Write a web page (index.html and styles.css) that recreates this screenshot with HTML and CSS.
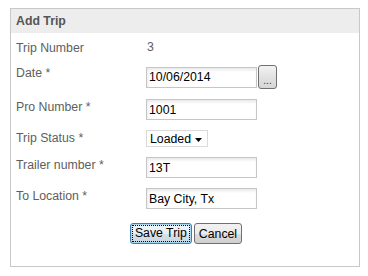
FILE: index.html
```html
<!DOCTYPE html>
<html lang="en">
<head>
    <meta charset="UTF-8">
    <title>Add Trip</title>
    <link rel="stylesheet" href="styles.css">
</head>
<body>
<div class="panel">
    <div class="panel-title">Add Trip</div>
    <form class="trip-form">
        <div class="row">
            <label>Trip Number</label>
            <span class="value">3</span>
        </div>
        <div class="row row-date">
            <label>Date *</label>
            <div class="field">
                <input type="text" class="text-box" value="10/06/2014">
                <button type="button" class="pick">...</button>
            </div>
        </div>
        <div class="row">
            <label>Pro Number *</label>
            <input type="text" class="text-box" value="1001">
        </div>
        <div class="row">
            <label>Trip Status *</label>
            <div class="select-box">
                <span>Loaded</span>
                <svg width="7" height="4" viewBox="0 0 7 4"><path d="M0 0h7L3.5 4z" fill="#000"/></svg>
            </div>
        </div>
        <div class="row">
            <label>Trailer number *</label>
            <input type="text" class="text-box" value="13T">
        </div>
        <div class="row">
            <label>To Location *</label>
            <input type="text" class="text-box" value="Bay City, Tx">
        </div>
        <div class="actions">
            <button type="submit" class="btn btn-focus"><span>Save Trip</span></button>
            <button type="button" class="btn">Cancel</button>
        </div>
    </form>
</div>
</body>
</html>
```

FILE: styles.css
```css
body {
    margin: 0;
    font-family: "Liberation Sans", Arial, sans-serif;
    font-size: 12.3px;
    background: #fff;
}
.panel {
    width: 348px;
    height: 257px;
    margin: 8px 0 0 10px;
    border: 1px solid #c8c8c8;
}
.panel-title {
    height: 24px;
    line-height: 24px;
    padding-left: 5px;
    background: #ededed;
    color: #555;
    font-weight: bold;
}
.trip-form {
    display: flex;
    flex-direction: column;
    gap: 10px;
    padding: 7px 0 0 5px;
}
.row {
    display: flex;
    align-items: flex-start;
}
.row label {
    width: 130px;
    padding-top: 1px;
    line-height: 14px;
    color: #5e5e5e;
}
.value {
    line-height: 14px;
    color: #5e5e5e;
    padding-left: 1px;
}
.field {
    display: flex;
    align-items: center;
    gap: 1px;
}
.row-date label {
    padding-top: 1px;
}
.text-box {
    box-sizing: border-box;
    width: 111px;
    height: 21px;
    margin: 0;
    padding: 0 2px;
    border: 1px solid #c6c6c6;
    font-family: inherit;
    font-size: 12.3px;
    color: #000;
    background: #fff;
    box-shadow: inset 1px 2px 3px rgba(0, 0, 0, 0.09);
}
.pick {
    box-sizing: border-box;
    width: 19px;
    height: 24px;
    margin: 0;
    padding: 8px 0 0;
    border: 1px solid #707070;
    border-radius: 3px;
    background: linear-gradient(#f3f3f3, #e2e2e2 50%, #d6d6d6);
    font-family: inherit;
    font-size: 10px;
    line-height: 10px;
    color: #333;
}
.select-box {
    box-sizing: border-box;
    width: 62px;
    height: 17px;
    display: flex;
    align-items: center;
    justify-content: space-between;
    padding: 0 5px 0 3px;
    border: 1px solid #dadada;
    color: #000;
}
.select-box svg {
    margin-top: 2px;
}
.actions {
    display: flex;
    justify-content: center;
    gap: 2px;
    margin-top: 4px;
    padding-left: 2px;
    padding-right: 5px;
}
.btn {
    box-sizing: border-box;
    height: 21px;
    min-width: 48px;
    margin: 0;
    padding: 0 4px;
    border: 1px solid #707070;
    border-radius: 3px;
    background: linear-gradient(#f2f2f2, #ebebeb 50%, #dddddd 51%, #cfcfcf);
    font-family: inherit;
    font-size: 12.3px;
    color: #000;
}
.btn-focus {
    padding: 1px;
    border-color: #3c7fb1;
    box-shadow: inset 0 0 0 1px #a8d8f2;
    background: linear-gradient(#f0f6fa, #e6eef3 50%, #d6e2ea 51%, #c8d6df);
}
.btn-focus span {
    display: block;
    height: 17px;
    line-height: 15px;
    padding: 0 2px;
    box-sizing: border-box;
    border: 1px dotted #000;
}
```
